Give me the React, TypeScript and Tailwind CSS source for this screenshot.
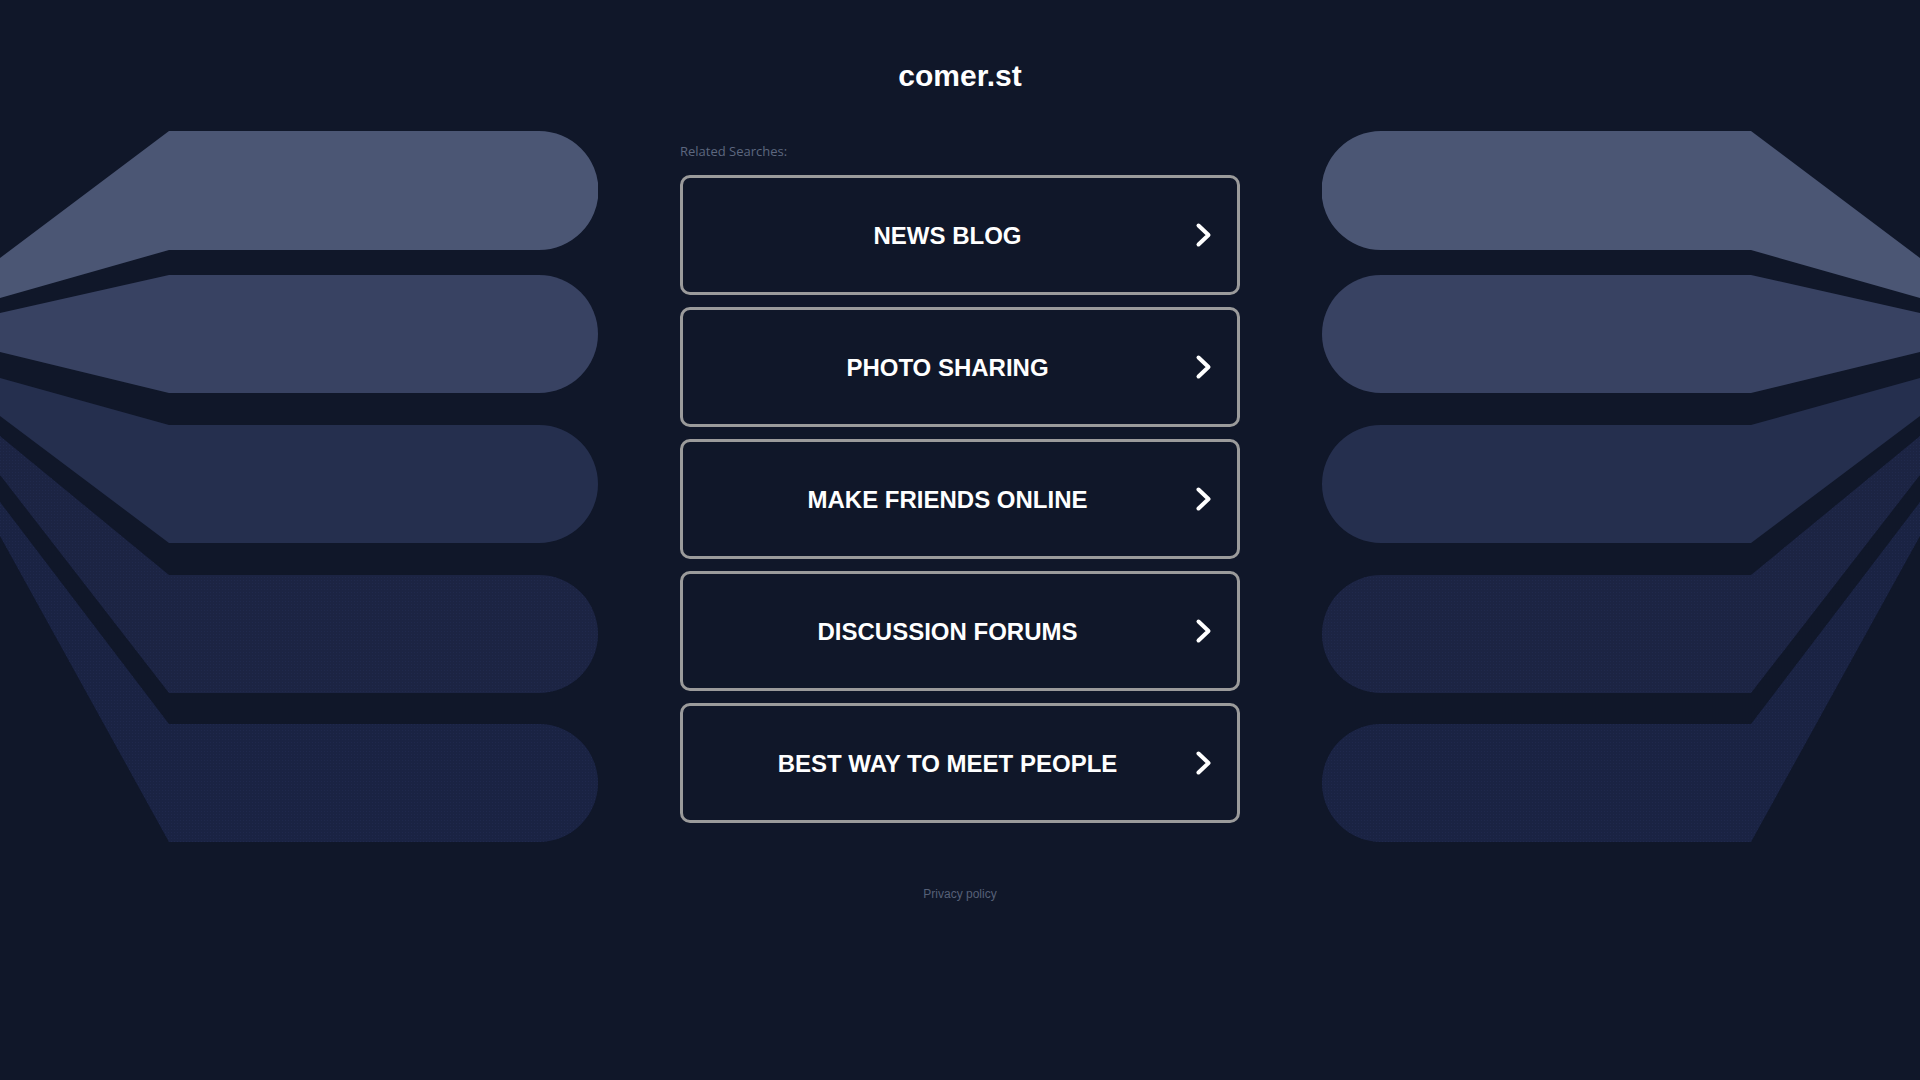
const searches = [
	"NEWS BLOG",
	"PHOTO SHARING",
	"MAKE FRIENDS ONLINE",
	"DISCUSSION FORUMS",
	"BEST WAY TO MEET PEOPLE",
]

function Fan({ flip }: { flip?: boolean }) {
	const dots = flip ? "dotsR" : "dotsL"
	return (
		<svg
			width="598"
			height="720"
			viewBox="0 128 598 720"
			className={flip ? "-scale-x-100" : ""}
		>
			<defs>
				<pattern id={dots} width="3" height="3" patternUnits="userSpaceOnUse">
					<rect x="0" y="0" width="1" height="1" fill="#27305a" />
				</pattern>
			</defs>
			<path d="M0 257 L169 130 H539 A59.5 59.5 0 0 1 539 249 H169 L0 297 Z" fill="#4b5674" />
			<path d="M0 312 L169 274 H539 A59 59 0 0 1 539 392 H169 L0 351 Z" fill="#384262" />
			<path d="M0 377 L169 424 H539 A59 59 0 0 1 539 542 H169 L0 415 Z" fill="#252f4e" />
			<path d="M0 435 L169 574 H539 A59 59 0 0 1 539 692 H169 L0 474 Z" fill="#1c2443" />
			<path d="M0 435 L169 574 H539 A59 59 0 0 1 539 692 H169 L0 474 Z" fill={`url(#${dots})`} opacity="0.4" />
			<path d="M0 501 L169 723 H539 A59 59 0 0 1 539 841 H169 L0 535 Z" fill="#1a2343" />
			<path d="M0 501 L169 723 H539 A59 59 0 0 1 539 841 H169 L0 535 Z" fill={`url(#${dots})`} opacity="0.4" />
		</svg>
	)
}

function Chevron() {
	return (
		<svg width="17" height="26" viewBox="0 0 17 26" fill="none">
			<path d="M3.5 3.5 L13.5 13 L3.5 22.5" stroke="white" strokeWidth="4" strokeLinecap="round" strokeLinejoin="round" />
		</svg>
	)
}

export default function App() {
	return (
		<main className="min-h-screen bg-[#101729] font-['Liberation_Sans',Arial,sans-serif]">
			<h1 className="pt-[58px] text-center text-[30px] font-bold leading-[36px] text-white">
				comer.st
			</h1>
			<div className="mt-[35px] grid grid-cols-[598px_1fr_598px]">
				<Fan />
				<div className="flex justify-center">
					<div className="w-[560px]">
						<p className="mt-[14px] mb-[16px] font-['Open_Sans',sans-serif] text-[13px] leading-[16px] text-[#5d677f]">
							Related Searches:
						</p>
						<div className="flex flex-col gap-[12px]">
							{searches.map((s) => (
								<a
									key={s}
									href="#"
									className="flex h-[120px] items-center rounded-[10px] border-[3px] border-[#9b9b9b] pl-[17px] pr-[25px]"
								>
									<span className="flex-1 pt-[2px] text-center text-[24px] font-bold text-white">{s}</span>
									<Chevron />
								</a>
							))}
						</div>
					</div>
				</div>
				<Fan flip />
			</div>
			<p className="mt-[37px] text-center text-[12px] leading-[16px] text-[#566077]">
				<a href="#">Privacy policy</a>
			</p>
		</main>
	)
}
